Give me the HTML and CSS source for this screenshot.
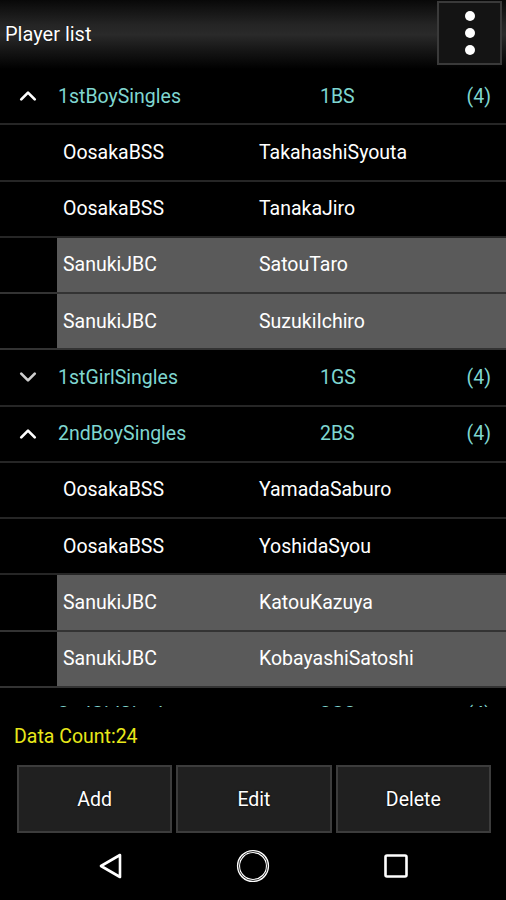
FILE: index.html
```html
<!DOCTYPE html>
<html lang="en">
<head>
    <meta charset="UTF-8">
    <meta name="viewport" content="width=device-width, initial-scale=1.0">
    <title>Player list</title>
    <link rel="stylesheet" href="styles.css">
</head>
<body>
    <header class="app-bar">
        <h1>Player list</h1>
        <button class="menu-btn" aria-label="Menu">
            <span></span><span></span><span></span>
        </button>
    </header>

    <main>
        <ul class="player-list">
            <li class="group">
                <svg class="chevron" viewBox="0 0 16 10"><path d="M2 8 L8 2 L14 8"/></svg>
                <div class="group-name">1stBoySingles</div>
                <div class="group-code">1BS</div>
                <div class="group-count">(4)</div>
            </li>
            <li class="player"><div>OosakaBSS</div><div>TakahashiSyouta</div></li>
            <li class="player"><div>OosakaBSS</div><div>TanakaJiro</div></li>
            <li class="player selected"><div>SanukiJBC</div><div>SatouTaro</div></li>
            <li class="player selected"><div>SanukiJBC</div><div>SuzukiIchiro</div></li>

            <li class="group">
                <svg class="chevron down" viewBox="0 0 16 10"><path d="M2 2 L8 8 L14 2"/></svg>
                <div class="group-name">1stGirlSingles</div>
                <div class="group-code">1GS</div>
                <div class="group-count">(4)</div>
            </li>

            <li class="group">
                <svg class="chevron" viewBox="0 0 16 10"><path d="M2 8 L8 2 L14 8"/></svg>
                <div class="group-name">2ndBoySingles</div>
                <div class="group-code">2BS</div>
                <div class="group-count">(4)</div>
            </li>
            <li class="player"><div>OosakaBSS</div><div>YamadaSaburo</div></li>
            <li class="player"><div>OosakaBSS</div><div>YoshidaSyou</div></li>
            <li class="player selected"><div>SanukiJBC</div><div>KatouKazuya</div></li>
            <li class="player selected"><div>SanukiJBC</div><div>KobayashiSatoshi</div></li>

            <li class="group">
                <svg class="chevron down" viewBox="0 0 16 10"><path d="M2 2 L8 8 L14 2"/></svg>
                <div class="group-name">2ndGirlSingles</div>
                <div class="group-code">2GS</div>
                <div class="group-count">(4)</div>
            </li>
        </ul>

        <div class="data-count">Data Count:24</div>

        <div class="actions">
            <button>Add</button>
            <button>Edit</button>
            <button>Delete</button>
        </div>
    </main>

    <nav class="nav-bar">
        <svg width="26" height="28" viewBox="0 0 26 28"><path d="M23 3 L4 14 L23 25 Z" fill="none" stroke="#fff" stroke-width="2.6" stroke-linejoin="round"/></svg>
        <svg width="36" height="36" viewBox="0 0 36 36"><circle cx="18" cy="18" r="14.5" fill="none" stroke="#fff" stroke-width="3.2"/><circle cx="18" cy="18" r="14.5" fill="none" stroke="#000" stroke-width="0.8"/></svg>
        <svg width="26" height="26" viewBox="0 0 26 26"><rect x="2.5" y="2.5" width="21" height="21" rx="1.5" fill="none" stroke="#fff" stroke-width="2.6"/></svg>
    </nav>
</body>
</html>
```

FILE: styles.css
```css
body {
    margin: 0;
    width: 506px;
    height: 900px;
    background: #000;
    color: #fff;
    font-family: Roboto, 'Noto Sans', sans-serif;
    overflow: hidden;
}

.app-bar {
    height: 69px;
    display: flex;
    align-items: center;
    justify-content: space-between;
    background: linear-gradient(#080808 0%, #242424 35%, #2a2a2a 50%, #141414 75%, #000 100%);
}

.app-bar h1 {
    margin: 0 0 2px 5px;
    font-size: 20px;
    font-weight: 400;
    text-shadow: 0 0 1px #000;
}

.menu-btn {
    width: 65px;
    height: 64px;
    margin: 0 4px 4px 0;
    box-sizing: border-box;
    border: 2px solid #3a3a3a;
    background: #141414;
    display: flex;
    flex-direction: column;
    align-items: center;
    justify-content: center;
    gap: 7px;
    padding: 0;
}

.menu-btn span {
    width: 10px;
    height: 10px;
    border-radius: 50%;
    background: #fff;
}

/* list is cut off mid-row, like the scrolled view in the app */
.player-list {
    list-style: none;
    margin: 0 0 2px;
    padding: 0;
    height: 638px;
    overflow: hidden;
}

.player-list li {
    height: 54.25px;
    border-bottom: 2px solid #262626;
    display: flex;
    align-items: center;
    font-size: 19.5px;
}

.group {
    color: #7fd6d0;
}

.chevron {
    width: 18px;
    height: 12px;
    margin: 0 21px 0 19px;
    fill: none;
    stroke: #fff;
    stroke-width: 2.4;
    stroke-linecap: round;
    stroke-linejoin: round;
}

.chevron.down {
    stroke: #cfcfcf;
}

.group-name {
    width: 262px;
}

.group-code {
    flex: 1;
}

.group-count {
    padding-right: 15px;
}

.player {
    padding-left: 63px;
}

.player div:first-child {
    width: 196px;
}

.player.selected {
    background: linear-gradient(to right, #000 57px, #5a5a5a 57px);
    border-bottom-color: #333;
}

.data-count {
    height: 54px;
    padding-left: 14px;
    display: flex;
    align-items: center;
    color: #e8e81a;
    font-size: 19.5px;
}

.actions {
    display: flex;
    gap: 4px;
    margin: 2px 15px 0 17px;
}

.actions button {
    flex: 1;
    height: 68px;
    background: #202020;
    border: 2px solid #3c3c3c;
    color: #fff;
    font-family: Roboto, 'Noto Sans', sans-serif;
    font-size: 19.5px;
    text-shadow: 0 0 2px #000;
}

.nav-bar {
    height: 66px;
    display: flex;
    align-items: center;
    justify-content: center;
    gap: 112px;
}
```
